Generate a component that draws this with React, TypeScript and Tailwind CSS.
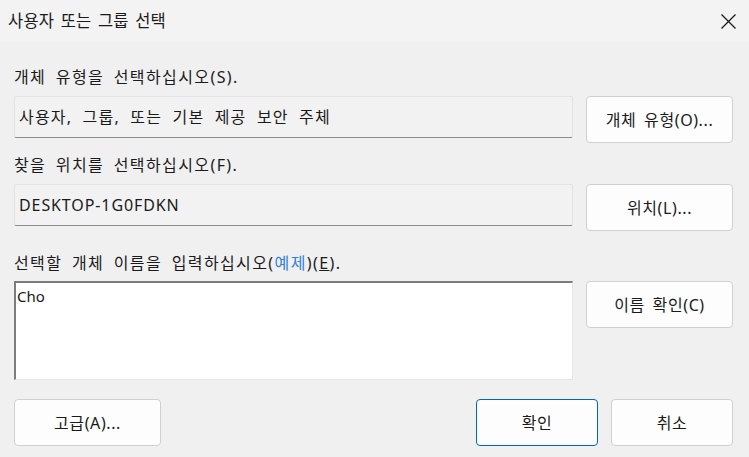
import React from "react";

const font = {
  fontFamily: '"Noto Sans", "Noto Sans CJK KR", sans-serif',
  letterSpacing: "0.6px",
  wordSpacing: "3px",
};

const labelStyle = { letterSpacing: "1.4px", wordSpacing: "4px" };

function Btn({ children, primary = false, className = "" }: { children: React.ReactNode; primary?: boolean; className?: string }) {
  return (
    <div
      className={`flex items-center justify-center h-[47px] rounded-[4px] border bg-[#fdfdfd] text-[16px] text-[#1a1a1a] ${
        primary ? "border-[#0067c0]" : "border-[#d0d0d0]"
      } ${className}`}
    >
      {children}
    </div>
  );
}

export default function App() {
  return (
    <div className="w-[749px] h-[457px] bg-[#f0f0f0] overflow-hidden relative" style={font}>
      <div className="h-[42px] bg-[#f3f3f3] flex items-center justify-between pl-[8px] pr-[13px]">
        <span className="text-[16.5px] text-[#1a1a1a] leading-none" style={{ letterSpacing: "0.2px", wordSpacing: "2px" }}>
          사용자 또는 그룹 선택
        </span>
        <svg width="15" height="15" viewBox="0 0 15 15">
          <path d="M0.5 0.5 L14.5 14.5 M14.5 0.5 L0.5 14.5" stroke="#1a1a1a" strokeWidth="1.3" fill="none" />
        </svg>
      </div>

      <div className="px-[14px] pr-[16px]">
        <div className="mt-[25px] h-[20px] leading-[20px] text-[16px] text-[#1a1a1a]" style={labelStyle}>
          개체 유형을 선택하십시오(S).
        </div>
        <div className="mt-[9px] flex items-start gap-[13px]">
          <div
            className="w-[559px] h-[42px] bg-[#f2f2f2] border border-[#e2e2e2] border-b-[#8a8a8a] rounded-[2px] flex items-center pl-[4px] text-[16px] text-[#1a1a1a]"
            style={{ letterSpacing: "1.2px", wordSpacing: "5px" }}
          >
            사용자, 그룹, 또는 기본 제공 보안 주체
          </div>
          <Btn className="w-[147px]">개체 유형(O)...</Btn>
        </div>

        <div className="mt-[12px] h-[20px] leading-[20px] text-[16px] text-[#1a1a1a]" style={labelStyle}>
          찾을 위치를 선택하십시오(F).
        </div>
        <div className="mt-[9px] flex items-start gap-[13px]">
          <div
            className="w-[559px] h-[42px] bg-[#f2f2f2] border border-[#e2e2e2] border-b-[#8a8a8a] rounded-[2px] flex items-center pl-[4px] text-[16px] text-[#1a1a1a]"
            style={{ letterSpacing: "0.9px" }}
          >
            DESKTOP-1G0FDKN
          </div>
          <Btn className="w-[147px]">위치(L)...</Btn>
        </div>

        <div className="mt-[22px] h-[20px] leading-[20px] text-[16px] text-[#1a1a1a]" style={labelStyle}>
          선택할 개체 이름을 입력하십시오(<span className="text-[#2f80d6]">예제</span>)(<span className="underline">E</span>).
        </div>
        <div className="mt-[8px] flex items-start gap-[13px]">
          <div
            className="w-[559px] h-[99px] bg-white border-t-2 border-l-2 border-t-[#7d7d7d] border-l-[#7d7d7d] border-r border-b border-r-[#e6e6e6] border-b-[#e6e6e6] pl-[1px] pt-[3px] text-[15px] leading-[20px] text-[#1a1a1a]"
            style={{ letterSpacing: "0px" }}
          >
            Cho
          </div>
          <Btn className="w-[147px]">이름 확인(C)</Btn>
        </div>

        <div className="mt-[19px] flex items-start">
          <Btn className="w-[147px]">고급(A)...</Btn>
          <div className="flex-1" />
          <Btn primary className="w-[122px]">확인</Btn>
          <Btn className="w-[122px] ml-[13px]">취소</Btn>
        </div>
      </div>
    </div>
  );
}
